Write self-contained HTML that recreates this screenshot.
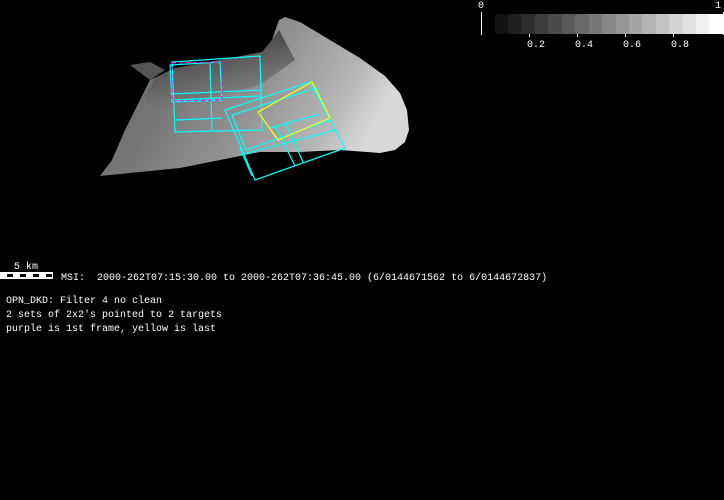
<!DOCTYPE html>
<html><head><style>
html,body{margin:0;padding:0;background:#000;width:724px;height:500px;overflow:hidden}
.t{position:absolute;font-family:"Liberation Mono","DejaVu Sans Mono",monospace;font-size:10px;color:#fff;white-space:pre;line-height:12px}
</style></head><body>
<svg width="724" height="500" style="position:absolute;left:0;top:0">
<defs>
<linearGradient id="g" x1="0" y1="0" x2="1" y2="0.3">
<stop offset="0" stop-color="#606060"/>
<stop offset="0.35" stop-color="#787878"/>
<stop offset="0.6" stop-color="#929292"/>
<stop offset="0.85" stop-color="#b5b5b5"/>
<stop offset="1" stop-color="#d8d8d8"/>
</linearGradient>
<linearGradient id="g2" x1="0" y1="0" x2="0" y2="1">
<stop offset="0" stop-color="#000" stop-opacity="0.5"/>
<stop offset="1" stop-color="#000" stop-opacity="0"/>
</linearGradient>
</defs>
<path d="M100,176 L112,160 L125,130 L140,100 L150,80 L175,68 L220,60 L262,52 L272,40 L279,20 L285,17 L300,22 L330,40 L360,58 L385,76 L400,93 L407,110 L409,130 L405,142 L395,150 L380,153 L340,150 L300,152 L260,152 L220,160 L180,168 L140,172 Z" fill="url(#g)"/>
<path d="M145,95 L155,78 L175,68 L220,60 L262,52 L272,40 L279,30 L295,60 L260,85 L200,100 L150,110 Z" fill="url(#g2)"/>
<path d="M130,65 L150,62 L165,70 L150,80 Z" fill="#555"/>
<g fill="none" stroke="#0ff" stroke-width="1.2">
<path d="M172,62 L260,56 L262,130 L175,132 Z"/>
<path d="M170,65 L220,62 L222,100 L172,102 Z"/>
<path d="M210,62 L212,130 M172,94 L262,90 M175,100 L260,96"/>
<path d="M176,120 L222,118"/>
<path d="M225,110 L310,82 L345,148 L255,180 Z"/>
<path d="M232,115 L316,88 L330,120 L246,150 Z"/>
<path d="M240,148 L252,176 M275,125 L295,166 M285,122 L303,162 M240,155 L335,130"/>
<path d="M270,128 L320,114"/>
</g>
<path d="M258,112 L312,82 L330,118 L278,140 Z" fill="none" stroke="#ff0" stroke-width="1.2"/>
<path d="M172,63 L222,62 L222,100 L172,101 Z" fill="none" stroke="#f0f" stroke-width="1" stroke-dasharray="4,3"/>
<g>
<rect x="495" y="14" width="14" height="20" fill="#111"/>
<rect x="508" y="14" width="14" height="20" fill="#1f1f1f"/>
<rect x="521" y="14" width="14" height="20" fill="#2d2d2d"/>
<rect x="535" y="14" width="14" height="20" fill="#3c3c3c"/>
<rect x="548" y="14" width="14" height="20" fill="#4b4b4b"/>
<rect x="562" y="14" width="14" height="20" fill="#5a5a5a"/>
<rect x="575" y="14" width="14" height="20" fill="#696969"/>
<rect x="589" y="14" width="14" height="20" fill="#787878"/>
<rect x="602" y="14" width="14" height="20" fill="#878787"/>
<rect x="616" y="14" width="14" height="20" fill="#969696"/>
<rect x="629" y="14" width="14" height="20" fill="#a5a5a5"/>
<rect x="642" y="14" width="14" height="20" fill="#b4b4b4"/>
<rect x="656" y="14" width="14" height="20" fill="#c3c3c3"/>
<rect x="669" y="14" width="14" height="20" fill="#d2d2d2"/>
<rect x="683" y="14" width="14" height="20" fill="#e1e1e1"/>
<rect x="696" y="14" width="14" height="20" fill="#f0f0f0"/>
<rect x="709" y="14" width="15" height="20" fill="#fff"/>
</g>
<g stroke="#fff" stroke-width="1">
<path d="M481.5,12 V35 M723.5,12 V35 M529.5,34 V37 M577.5,34 V37 M625.5,34 V37 M673.5,34 V37"/>
</g>
<rect x="0" y="272" width="53" height="7" fill="#fff"/>
<g fill="#000">
<rect x="7" y="274" width="6" height="3"/><rect x="20" y="274" width="6" height="3"/><rect x="33" y="274" width="6" height="3"/><rect x="46" y="274" width="6" height="3"/>
</g>
</svg>
<div class="t" style="left:478px;top:1px">0</div>
<div class="t" style="left:715px;top:1px">1</div>
<div class="t" style="left:527px;top:40px">0.2</div>
<div class="t" style="left:575px;top:40px">0.4</div>
<div class="t" style="left:623px;top:40px">0.6</div>
<div class="t" style="left:671px;top:40px">0.8</div>
<div class="t" style="left:14px;top:262px">5 km</div>
<div class="t" style="left:61px;top:273px">MSI:  2000-262T07:15:30.00 to 2000-262T07:36:45.00 (6/0144671562 to 6/0144672837)</div>
<div class="t" style="left:6px;top:295px;line-height:14px">OPN_DKD: Filter 4 no clean
2 sets of 2x2's pointed to 2 targets
purple is 1st frame, yellow is last</div>
</body></html>
